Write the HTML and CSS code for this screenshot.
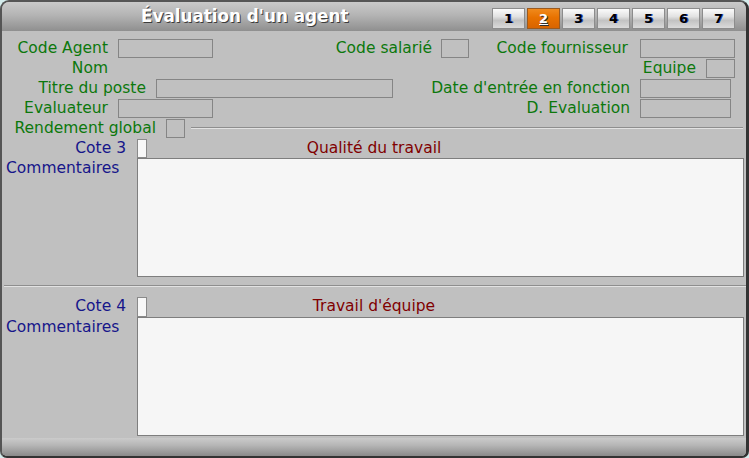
FILE: index.html
```html
<!DOCTYPE html>
<html lang="fr">
<head>
<meta charset="utf-8">
<title>Évaluation d'un agent</title>
<link rel="stylesheet" href="styles.css">
</head>
<body>
<div class="window">
  <div class="titlebar">
    <span class="title">Évaluation d'un agent</span>
    <div class="tabs">
      <span class="tab">1</span>
      <span class="tab active">2</span>
      <span class="tab">3</span>
      <span class="tab">4</span>
      <span class="tab">5</span>
      <span class="tab">6</span>
      <span class="tab">7</span>
    </div>
  </div>
  <div class="content">
    <div class="row">
      <label class="lbl w106">Code Agent</label><span class="field f95"></span>
      <label class="lbl w219">Code salarié</label><span class="field f28 ml9"></span>
      <label class="lbl w159">Code fournisseur</label><span class="field f95 ml12"></span>
    </div>
    <div class="row">
      <label class="lbl w106">Nom</label>
      <label class="lbl push">Equipe</label><span class="field f29 mr11"></span>
    </div>
    <div class="row">
      <label class="lbl w144">Titre du poste</label><span class="field f237"></span>
      <label class="lbl push">Date d'entrée en fonction</label><span class="field f91 mr15"></span>
    </div>
    <div class="row">
      <label class="lbl w106">Evaluateur</label><span class="field f95"></span>
      <label class="lbl push">D. Evaluation</label><span class="field f91 mr15"></span>
    </div>
    <div class="row">
      <label class="lbl w154">Rendement global</label><span class="field f19"></span>
      <span class="groove rg"></span>
    </div>

    <div class="cote">
      <label class="lbl-blue w124">Cote 3</label><span class="check"></span>
      <span class="subtitle">Qualité du travail</span>
    </div>
    <div class="comment">
      <label class="lbl-blue cmt">Commentaires</label>
      <div class="memo"></div>
    </div>

    <div class="groove sep"></div>

    <div class="cote c4">
      <label class="lbl-blue w124">Cote 4</label><span class="check"></span>
      <span class="subtitle">Travail d'équipe</span>
    </div>
    <div class="comment">
      <label class="lbl-blue cmt">Commentaires</label>
      <div class="memo"></div>
    </div>
  </div>
  <div class="bottombar"></div>
</div>
</body>
</html>
```

FILE: styles.css
```css
html, body {
  margin: 0;
  padding: 0;
  background: #d4ecec;
}

.window {
  width: 749px;
  height: 458px;
  box-sizing: border-box;
  border: 2px solid #555555;
  border-right: 3px solid #333333;
  border-bottom: 2px solid #333333;
  border-radius: 9px 9px 7px 7px;
  background: #c0c0c0;
  overflow: hidden;
  display: flex;
  flex-direction: column;
  font-family: "DejaVu Sans", Verdana, sans-serif;
}

.titlebar {
  height: 29px;
  flex: none;
  display: flex;
  align-items: center;
  background: linear-gradient(to bottom, #c9c9c9 0%, #b4b4b4 45%, #8f8f8f 100%);
  padding-left: 139px;
}

.title {
  font-weight: bold;
  font-size: 16.8px;
  color: #ffffff;
  text-shadow: 1px 1px 0 #3c3c3c;
  margin-top: -1px;
}

.tabs {
  margin-left: auto;
  margin-right: 11px;
  margin-top: 3px;
  display: flex;
  gap: 2px;
}

.tab {
  width: 33px;
  height: 21px;
  box-sizing: border-box;
  border: 1px solid #8c8c8c;
  background: linear-gradient(to bottom, #fbfbfb 0%, #e2e2e2 40%, #c2c2c2 60%, #dadada 100%);
  font-weight: bold;
  font-size: 13px;
  color: #000000;
  text-shadow: 1px 0 0 #3050c0;
  display: flex;
  align-items: center;
  justify-content: center;
}

.tab.active {
  background: linear-gradient(to bottom, #f08a1c 0%, #e87200 45%, #d86400 100%);
  border-color: #9a5a20;
  color: #ffffff;
  text-decoration: underline;
  text-shadow: 1px 1px 0 #303030;
}

.content {
  flex: 1;
  padding-top: 8px;
  display: flex;
  flex-direction: column;
}

.row {
  height: 20px;
  display: flex;
  align-items: flex-start;
}

.lbl, .lbl-blue {
  font-size: 15.5px;
  line-height: 19px;
  text-align: right;
  white-space: nowrap;
  flex: none;
}
.lbl { color: #0c780c; }
.lbl-blue { color: #16168a; }

.w106 { width: 106px; margin-right: 10px; }
.w124 { width: 124px; margin-right: 11px; }
.w144 { width: 144px; margin-right: 10px; }
.w154 { width: 154px; margin-right: 10px; }
.w159 { width: 159px; }
.w219 { width: 219px; }
.push { margin-left: auto; margin-right: 10px; }

.field {
  height: 19px;
  box-sizing: border-box;
  border: 1px solid #858585;
  flex: none;
}
.f19 { width: 19px; }
.f28 { width: 28px; }
.f29 { width: 29px; }
.f91 { width: 91px; }
.f95 { width: 95px; }
.f237 { width: 237px; }
.ml9 { margin-left: 9px; }
.ml12 { margin-left: 12px; }
.mr11 { margin-right: 11px; }
.mr15 { margin-right: 15px; }

.groove {
  height: 0;
  border-top: 1px solid #8e8e8e;
  border-bottom: 1px solid #e2e2e2;
}
.rg {
  flex: 1;
  margin: 8px 3px 0 6px;
}
.sep {
  margin: 8px 0 10px 2px;
}

.cote {
  height: 19px;
  display: flex;
  align-items: flex-start;
}
.cote.c4 { height: 20px; }

.check {
  width: 10px;
  height: 100%;
  box-sizing: border-box;
  border: 1px solid #8a8a8a;
  background: #f8f8f8;
  flex: none;
}

.subtitle {
  width: 454px;
  text-align: center;
  font-size: 15.5px;
  line-height: 19px;
  color: #800000;
  white-space: nowrap;
}

.comment {
  display: flex;
  align-items: flex-start;
}

.cmt {
  width: 131px;
  padding-left: 4px;
  text-align: left;
  margin-top: 1px;
}

.memo {
  width: 607px;
  height: 119px;
  box-sizing: border-box;
  border: 1px solid #7e7e7e;
  background: #f6f6f6;
}

.bottombar {
  height: 18px;
  flex: none;
  margin-top: 2px;
  background: linear-gradient(to bottom, #cbcbcb 0%, #b6b6b6 40%, #8a8a8a 100%);
}
```
